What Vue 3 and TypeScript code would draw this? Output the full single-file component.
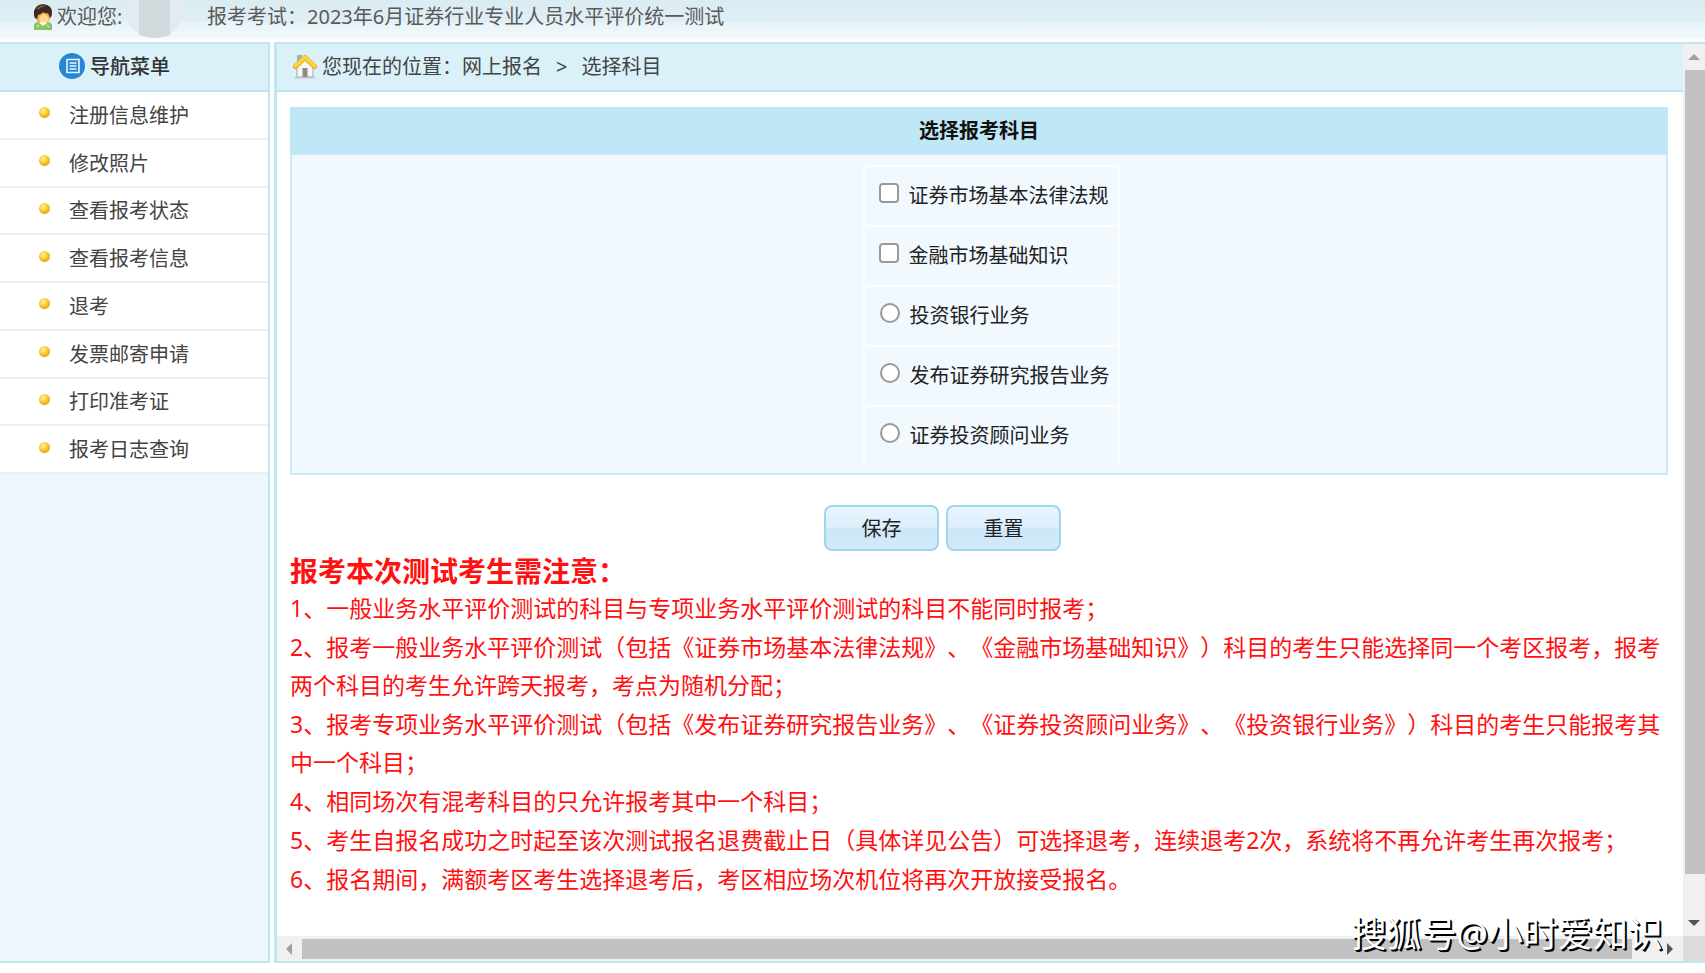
<script setup lang="ts">
import { ref } from 'vue'

interface Subject {
  id: string
  name: string
  kind: 'checkbox' | 'radio'
}

const menu: string[] = [
  '注册信息维护',
  '修改照片',
  '查看报考状态',
  '查看报考信息',
  '退考',
  '发票邮寄申请',
  '打印准考证',
  '报考日志查询',
]

const subjects: Subject[] = [
  { id: 'law', name: '证券市场基本法律法规', kind: 'checkbox' },
  { id: 'basics', name: '金融市场基础知识', kind: 'checkbox' },
  { id: 'banking', name: '投资银行业务', kind: 'radio' },
  { id: 'research', name: '发布证券研究报告业务', kind: 'radio' },
  { id: 'advisory', name: '证券投资顾问业务', kind: 'radio' },
]

const notices: string[] = [
  '1、一般业务水平评价测试的科目与专项业务水平评价测试的科目不能同时报考；',
  '2、报考一般业务水平评价测试（包括《证券市场基本法律法规》、《金融市场基础知识》）科目的考生只能选择同一个考区报考，报考两个科目的考生允许跨天报考，考点为随机分配；',
  '3、报考专项业务水平评价测试（包括《发布证券研究报告业务》、《证券投资顾问业务》、《投资银行业务》）科目的考生只能报考其中一个科目；',
  '4、相同场次有混考科目的只允许报考其中一个科目；',
  '5、考生自报名成功之时起至该次测试报名退费截止日（具体详见公告）可选择退考，连续退考2次，系统将不再允许考生再次报考；',
  '6、报名期间，满额考区考生选择退考后，考区相应场次机位将再次开放接受报名。',
]

const general = ref<string[]>([])
const special = ref<string>('')

function reset(): void {
  general.value = []
  special.value = ''
}
</script>

<template>
  <div class="page">
    <header class="topbar">
      <svg class="user" viewBox="0 0 20 26" aria-hidden="true">
        <path d="M1 26v-5q1-3 4-3h9q4 0 5 3v5z" fill="#86c562" />
        <path d="M4 23l2-2M16 23l-2-2" stroke="#c9ecb0" stroke-width="1.500" />
        <ellipse cx="10" cy="13" rx="7" ry="7" fill="#f9a94e" />
        <ellipse cx="11" cy="15" rx="4.500" ry="4.500" fill="#ffd98f" />
        <path d="M6 19l4 3 4-3-1-1H7z" fill="#fff3dc" />
        <path d="M1 11Q0 1 10 0q10 1 9 10-1 4-2 4l-2-5q-3 1-5-1-2 3-5 3l-1 4Q1 14 1 11z" fill="#3f2a22" />
        <path d="M4 4q4-4 9-2-4 0-8 4z" fill="#7a5d50" />
      </svg>
      <span class="welcome">欢迎您:</span>
      <svg class="portrait" viewBox="0 0 60 38" aria-hidden="true">
        <circle cx="30" cy="8" r="30" fill="#e2ebf1" />
        <path d="M14 0h31v35q-15 6-31 0z" fill="#d3dade" />
      </svg>
      <span class="exam">报考考试：2023年6月证券行业专业人员水平评价统一测试</span>
    </header>

    <div class="body">
      <aside class="sidebar">
        <h2 class="side-title">
          <svg class="menu-icon" viewBox="0 0 26 26" aria-hidden="true">
            <circle cx="13" cy="13" r="13" fill="#2686d3" />
            <path d="M8 6.500h12v13H8z" fill="none" stroke="#e8f5ff" stroke-width="1.600" />
            <path d="M10.500 10h7M10.500 13h7M10.500 16h7" stroke="#e8f5ff" stroke-width="1.500" />
          </svg>
          <span>导航菜单</span>
        </h2>
        <nav>
          <ul class="menu">
            <li v-for="item in menu" :key="item">
              <a href="#"><i class="dot"></i>{{ item }}</a>
            </li>
          </ul>
        </nav>
      </aside>

      <main class="frame">
        <div class="view">
          <div class="crumbs">
            <svg class="home" viewBox="0 0 24 26" aria-hidden="true">
              <path d="M4 2h5v8H4z" fill="#a9a9b2" />
              <path d="M4 13l8-8 8 8v11H4z" fill="#f7f7f8" stroke="#a5a8ae" />
              <path d="M2 24.500h20" stroke="#c3c5c8" stroke-width="2" />
              <path d="M9.500 15h5v9h-5z" fill="#8c8b8d" />
              <path d="M2.500 13.500L12 4.500l9.500 9" fill="none" stroke="#e6a817" stroke-width="5" stroke-linejoin="round" stroke-linecap="round" />
              <path d="M2.500 13L12 4l9.500 9" fill="none" stroke="#fbd53f" stroke-width="3.500" stroke-linejoin="round" stroke-linecap="round" />
            </svg>
            <span>您现在的位置：网上报名</span>
            <span class="sep">&gt;</span>
            <span>选择科目</span>
          </div>

          <form class="content" @submit.prevent @reset.prevent="reset">
            <section class="panel">
              <h1>选择报考科目</h1>
              <div class="choices">
                <div class="choice-list">
                  <label v-for="s in subjects" :key="s.id" class="choice" :for="s.id">
                    <input v-if="s.kind === 'checkbox'" :id="s.id" v-model="general" type="checkbox" :value="s.id" />
                    <input v-else :id="s.id" v-model="special" type="radio" name="special" :value="s.id" />
                    <span>{{ s.name }}</span>
                  </label>
                </div>
              </div>
            </section>
            <div class="actions">
              <button type="submit">保存</button>
              <button type="reset">重置</button>
            </div>
            <section class="notice">
              <h2>报考本次测试考生需注意：</h2>
              <p v-for="n in notices" :key="n">{{ n }}</p>
            </section>
          </form>
        </div>

        <div class="vbar" aria-hidden="true">
          <svg viewBox="0 0 12 6"><path d="M0 6l6-6 6 6z" fill="#a0a0a0" /></svg>
          <div class="vtrack"><div class="vthumb"></div></div>
          <svg viewBox="0 0 12 6"><path d="M0 0h12L6 6z" fill="#505558" /></svg>
        </div>
        <div class="hbar" aria-hidden="true">
          <svg viewBox="0 0 6 12"><path d="M6 0v12L0 6z" fill="#a0a0a0" /></svg>
          <div class="htrack"><div class="hthumb"></div></div>
          <svg viewBox="0 0 6 12"><path d="M0 0l6 6-6 6z" fill="#505558" /></svg>
        </div>
        <div class="corner"></div>
      </main>
    </div>
    <div class="watermark">搜狐号@小时爱知识</div>
  </div>
</template>

<style>
body {
  margin: 0;
  background: #fff;
}
</style>

<style scoped>
* {
  box-sizing: border-box;
}
.page {
  position: relative;
  display: flex;
  flex-direction: column;
  min-height: 100vh;
  padding-bottom: 10px;
  font-family: "Noto Sans", "Noto Sans CJK SC", sans-serif;
  font-size: 20px;
  line-height: 30px;
  color: #444;
  text-spacing-trim: space-all;
}
.topbar {
  display: flex;
  align-items: flex-start;
  height: 42px;
  padding-left: 33px;
  color: #5a5a5a;
  background: linear-gradient(#dbebf2 0, #e0eff6 22px, #e9f4f8 23px, #f1f9fc 38px, #fff 40px);
}
.user {
  width: 20px;
  height: 26px;
  margin: 4px 4px 0 0;
}
.welcome {
  width: 68px;
  padding-top: 2px;
  white-space: nowrap;
}
.portrait {
  width: 60px;
  height: 38px;
}
.exam {
  padding: 2px 0 0 22px;
}
.body {
  flex: 1;
  display: flex;
  gap: 4px;
}
.sidebar {
  flex: none;
  width: 270px;
  border: 2px solid #c0e5f3;
  border-left: 0;
  background: #eef7fb;
}
.side-title {
  display: flex;
  align-items: center;
  gap: 5px;
  height: 48px;
  margin: 0;
  padding-left: 59px;
  border-bottom: 2px solid #bce4f4;
  background: #daf1fa;
  font-size: 20px;
  font-weight: 500;
  color: #333;
}
.menu-icon {
  width: 26px;
  height: 26px;
  margin-bottom: 2px;
}
.menu {
  display: grid;
  grid-auto-rows: 1fr;
  height: 382px;
  margin: 0;
  padding: 0;
  list-style: none;
}
.menu li {
  display: flex;
  border-bottom: 2px solid #e6f1f6;
  background: #fff;
}
.menu a {
  flex: 1;
  display: flex;
  align-items: center;
  padding: 2px 0 0 39px;
  color: #444;
  text-decoration: none;
}
.dot {
  width: 11px;
  height: 11px;
  margin: 0 19px 6px 0;
  border-radius: 50%;
  background: radial-gradient(circle at 40% 35%, #ffe96b 15%, #f5bc2c 50%, #e38d10 100%);
}
.frame {
  flex: 1;
  min-width: 0;
  display: grid;
  grid-template-columns: minmax(0, 1fr) 22px;
  grid-template-rows: 1fr 25px;
  border: 2px solid #c0e5f3;
  border-left-width: 3px;
  border-right: 0;
}
.crumbs {
  display: flex;
  align-items: center;
  height: 48px;
  padding-left: 16px;
  border-bottom: 2px solid #bce4f4;
  background: #daf1fa;
}
.home {
  width: 24px;
  height: 26px;
  margin: 0 5px 2px 0;
}
.sep {
  padding: 0 14px;
}
.content {
  padding: 15px 15px 0 13px;
}
.panel h1 {
  margin: 0;
  height: 47px;
  font-size: 20px;
  line-height: 48px;
  font-weight: 700;
  text-align: center;
  color: #111;
  background: #c0e7f5;
}
.choices {
  display: flex;
  justify-content: center;
  padding: 10px 0 8px 24px;
  border: 2px solid #cde9f6;
  border-top-width: 1px;
  background: #f1f9ff;
}
.choice-list {
  border: solid #fafdff;
  border-width: 0 2px;
}
.choice {
  display: flex;
  align-items: center;
  height: 60px;
  padding: 0 8px 0 14px;
  border-top: 2px solid #fafdff;
  color: #222;
}
.choice input {
  appearance: none;
  width: 20px;
  height: 20px;
  margin: 0 10px 6px 0;
  border: 2px solid #999;
  border-radius: 4px;
  background: #fff;
}
.choice input[type="radio"] {
  margin-left: 1px;
  border-radius: 50%;
}
.choice input:checked {
  background: #2686d3;
  box-shadow: inset 0 0 0 3px #fff;
}
.actions {
  display: flex;
  justify-content: center;
  gap: 7px;
  padding: 30px 73px 0 0;
}
button {
  width: 115px;
  height: 46px;
  padding: 2px 0 0;
  border: 2px solid #9ed6ee;
  border-radius: 8px;
  background: linear-gradient(#e8f5fd 0, #dceffb 48%, #cde6f8 52%, #d3eafa 100%);
  font: inherit;
  color: #222;
}
.notice {
  color: #f11;
}
.notice h2 {
  margin: 0;
  padding-top: 2px;
  font-size: 28px;
  line-height: 36px;
  font-weight: 700;
}
.notice p {
  margin: 0 0 1px;
  font-size: 23px;
  line-height: 38px;
}
.vbar {
  display: flex;
  flex-direction: column;
  align-items: center;
  padding: 10px 0 10px;
  background: #f0f0f0;
}
.vbar svg {
  width: 12px;
  height: 6px;
}
.vtrack {
  flex: 1;
  align-self: stretch;
  padding: 10px 0 46px 2px;
}
.vthumb {
  height: 100%;
  background: #c1c1c1;
}
.hbar {
  display: flex;
  align-items: center;
  padding: 0 10px 0 9px;
  background: #f0f0f0;
}
.hbar svg {
  width: 6px;
  height: 12px;
}
.htrack {
  flex: 1;
  height: 20px;
  padding: 0 35px 0 10px;
}
.hthumb {
  height: 100%;
  background: #c1c1c1;
}
.corner {
  background: #dcdcdc;
}
.watermark {
  position: absolute;
  right: 42px;
  bottom: 14px;
  font-size: 35px;
  line-height: 50px;
  color: #fff;
  text-shadow: 2px 2px 0 #000, 1px 1px 0 #000;
}
</style>
